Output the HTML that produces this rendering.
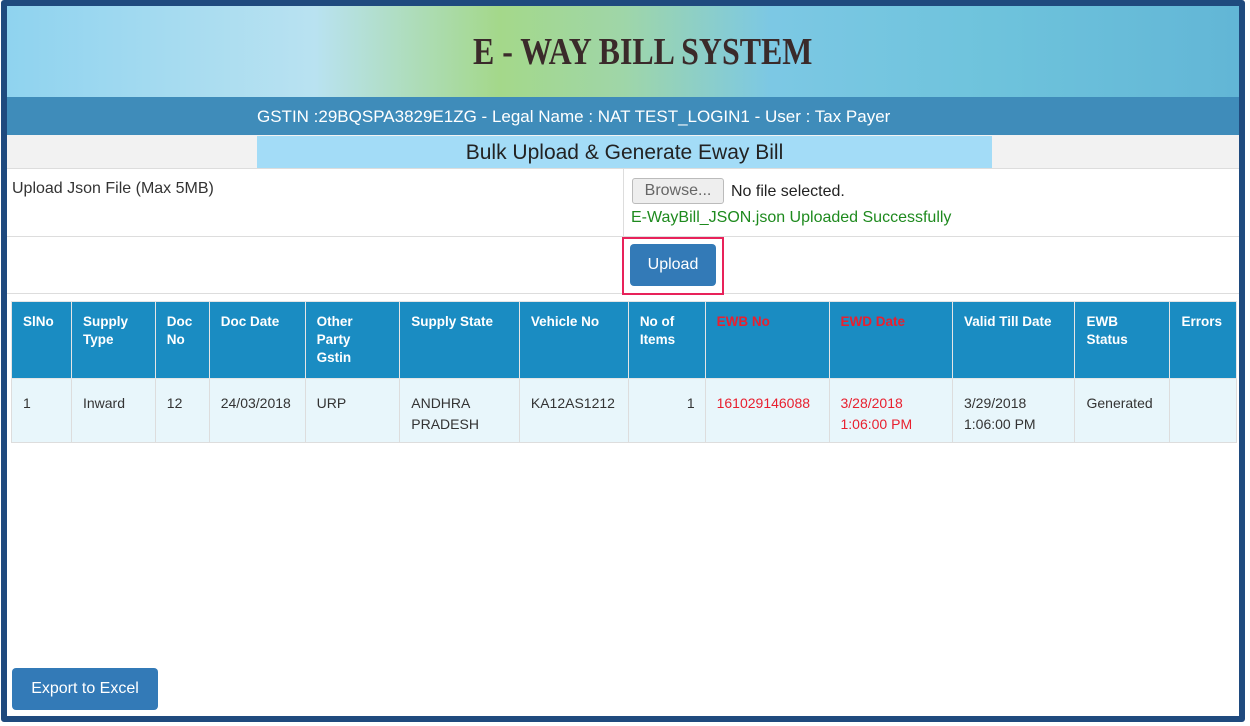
<!DOCTYPE html>
<html><head><style>
*{box-sizing:border-box;margin:0;padding:0}
body{width:1250px;height:726px;background:#fff;font-family:"Liberation Sans",Arial,sans-serif;position:relative;overflow:hidden}
.frame{position:absolute;left:1px;top:0;width:1244px;height:722px;border:6px solid #1f4a7e;border-radius:3px;background:#fff}
.banner{position:absolute;left:0;top:0;width:1232px;height:91px;background:linear-gradient(90deg,#8fd3ef 0%,#b9e2f1 25%,#a4d88a 40%,#9fd6a8 50%,#7cc8e4 62%,#6ec3dc 80%,#62b6d6 100%)}
.banner h1{position:absolute;left:466px;top:24px;white-space:nowrap;font-family:"Liberation Serif",serif;font-size:38px;font-weight:bold;color:#3a2a2a;transform:scaleX(0.84);transform-origin:0 0;letter-spacing:0px}
.gbar{position:absolute;left:0;top:91px;width:1232px;height:38px;background:#3f8cba;color:#fff;font-size:17px;text-align:left;padding-left:250px;line-height:40px}
.trow{position:absolute;left:0;top:129px;width:1232px;height:34px;background:#f2f2f2;border-bottom:1px solid #ddd}
.trow div{position:absolute;left:250px;width:735px;top:1px;height:32px;background:#a3dcf7;text-align:center;font-size:21px;line-height:33px;color:#222}
.urow{position:absolute;left:0;top:163px;width:1232px;height:68px;border-bottom:1px solid #ddd}
.urow .l{position:absolute;left:5px;top:11px;font-size:16px;color:#333}
.urow .sep{position:absolute;left:616px;top:0;width:1px;height:67px;background:#ddd}
.browse{position:absolute;left:625px;top:9px;width:92px;height:26px;border:1px solid #bbb;border-radius:3px;background:#eee;color:#666;font-size:16px;text-align:center;line-height:24px}
.nf{position:absolute;left:724px;top:14px;font-size:16px;color:#222}
.ok{position:absolute;left:624px;top:40px;font-size:16px;color:#1e8a1e}
.brow{position:absolute;left:0;top:231px;width:1232px;height:57px;border-bottom:1px solid #ddd}
.red{position:absolute;left:615px;top:0;width:102px;height:58px;border:2px solid #e8225a}
.up{position:absolute;left:6px;top:5px;width:86px;height:42px;background:#337ab7;border-radius:4px;color:#fff;font-size:16px;text-align:center;line-height:42px}
table{position:absolute;left:4px;top:295px;width:1226px;border-collapse:collapse;font-size:14px}
th{background:#1a8cc2;color:#fff;font-weight:bold;text-align:left;vertical-align:top;padding:11px 14px 0 11px;height:77px;border:1px solid #e5e5e5;font-size:13.5px;line-height:18px}
td{background:#e8f6fb;color:#333;vertical-align:top;padding:14px 10px 0 11px;height:64px;border:1px solid #ddd;line-height:21px}
.r{color:#e8202f}
.exp{position:absolute;left:5px;top:662px;width:146px;height:42px;background:#337ab7;border-radius:4px;color:#fff;font-size:16px;text-align:center;line-height:42px}
</style></head><body>
<div class="frame">
<div class="banner"><h1>E - WAY BILL SYSTEM</h1></div>
<div class="gbar">GSTIN :29BQSPA3829E1ZG - Legal Name : NAT TEST_LOGIN1 - User : Tax Payer</div>
<div class="trow"><div>Bulk Upload &amp; Generate Eway Bill</div></div>
<div class="urow"><div class="l">Upload Json File (Max 5MB)</div><div class="sep"></div>
<div class="browse">Browse...</div><div class="nf">No file selected.</div><div class="ok">E-WayBill_JSON.json Uploaded Successfully</div></div>
<div class="brow"><div class="red"><div class="up">Upload</div></div></div>
<table>
<tr><th style="width:60px">SlNo</th><th style="width:84px">Supply Type</th><th style="width:54px">Doc No</th><th style="width:96px">Doc Date</th><th style="width:95px">Other Party Gstin</th><th style="width:120px">Supply State</th><th style="width:109px">Vehicle No</th><th style="width:77px">No of Items</th><th style="width:124px" class="r">EWB No</th><th style="width:124px" class="r">EWD Date</th><th style="width:123px">Valid Till Date</th><th style="width:95px">EWB Status</th><th>Errors</th></tr>
<tr><td>1</td><td>Inward</td><td>12</td><td>24/03/2018</td><td>URP</td><td>ANDHRA PRADESH</td><td>KA12AS1212</td><td style="text-align:right">1</td><td class="r">161029146088</td><td class="r">3/28/2018 1:06:00 PM</td><td>3/29/2018 1:06:00 PM</td><td>Generated</td><td></td></tr>
</table>
<div class="exp">Export to Excel</div>
</div>
</body></html>
